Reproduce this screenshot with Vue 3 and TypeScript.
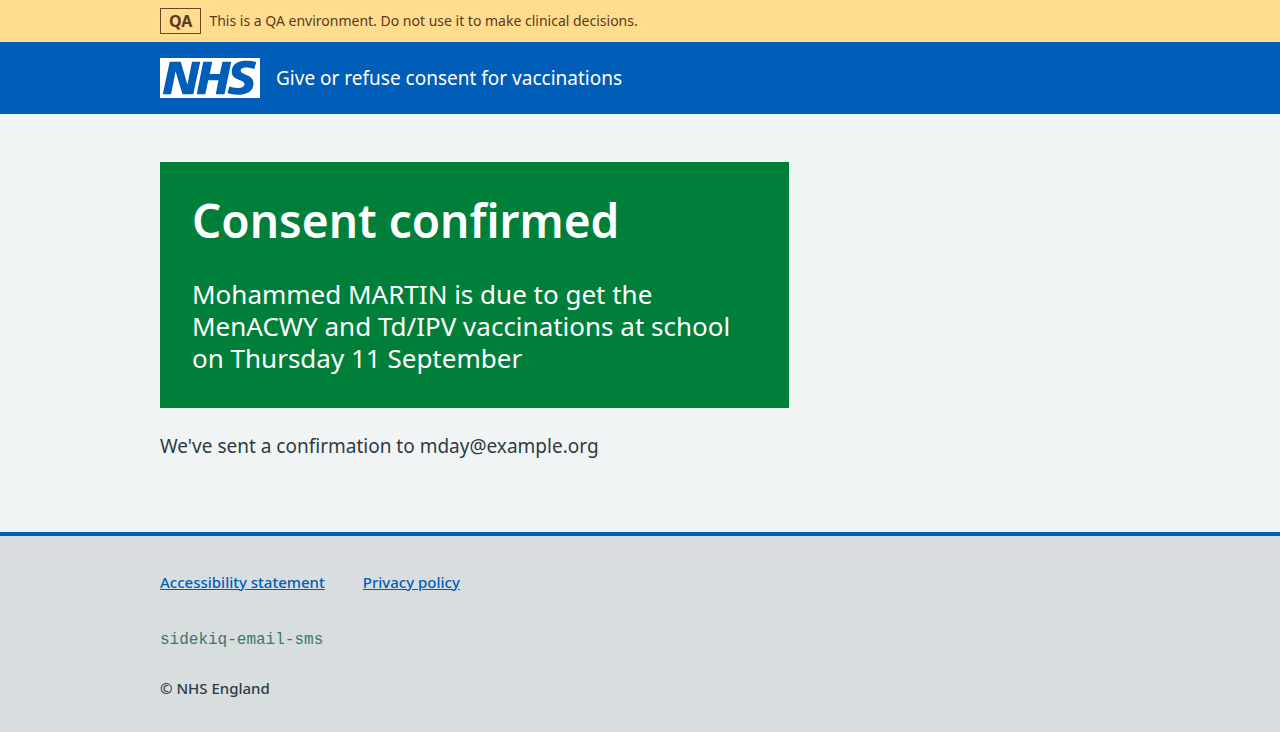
<script setup lang="ts">
interface FooterLink {
  label: string
  href: string
}

const footerLinks: FooterLink[] = [
  { label: 'Accessibility statement', href: '#accessibility-statement' },
  { label: 'Privacy policy', href: '#privacy-policy' },
]

const email = 'mday@example.org'
</script>

<template>
  <div class="page">
    <aside class="environment" aria-label="Environment">
      <div class="container environment-inner">
        <strong class="environment-tag">QA</strong>
        <span>This is a QA environment. Do not use it to make clinical decisions.</span>
      </div>
    </aside>

    <header class="header">
      <div class="container">
        <a class="header-link" href="#start">
          <svg class="logo" viewBox="0 0 200 80" role="img" aria-label="NHS">
            <path
              fill="currentColor"
              d="M200 0v80H0V0h200Zm-27.500 5.500c-14.500 0-29 5-29 22 0 10.200 7.700 13.500 14.700 16.300l.7.3c5.400 2 10.100 3.900 10.100 8.400 0 6.500-8.500 7.500-14 7.500s-12.500-1.500-16-3.500L135 70c5.500 2 13.500 3.500 20 3.500 15.500 0 32-4.500 32-22.500 0-19.500-25.500-16.500-25.500-25.500 0-5.500 5.500-6.500 12.500-6.500a35 35 0 0 1 14.500 3l4-13.500c-4.500-2-12-3-20-3Zm-131 2h-22l-14 65H22l9-45h.5l13.500 45h21.500l14-65H64l-9 45h-.5l-13-45Zm63 0h-18l-13 65h17l6-28H117l-5.500 28H129l13.500-65H125L119.500 32h-20l5-24.500Z"
            />
          </svg>
          <span>Give or refuse consent for vaccinations</span>
        </a>
      </div>
    </header>

    <main class="container main">
      <div class="content">
        <section class="panel">
          <h1 class="panel-title">Consent confirmed</h1>
          <p class="panel-body">
            Mohammed MARTIN is due to get the MenACWY and Td/IPV vaccinations at school on Thursday
            11 September
          </p>
        </section>
        <p class="body-text">We've sent a confirmation to {{ email }}</p>
      </div>
    </main>

    <footer class="footer">
      <div class="container">
        <ul class="footer-links">
          <li v-for="link in footerLinks" :key="link.href">
            <a :href="link.href">{{ link.label }}</a>
          </li>
        </ul>
        <p class="release">sidekiq-email-sms</p>
        <p class="copyright">© NHS England</p>
      </div>
    </footer>
  </div>
</template>

<style>
body {
  margin: 0;
  background: #d8dde0;
}
</style>

<style scoped>
.page {
  display: flex;
  flex-direction: column;
  min-height: 100vh;
  background: #f0f4f5;
  color: #2f3b40;
  font-family: 'Noto Sans', 'Open Sans', Arial, sans-serif;
  font-size: 19px;
  line-height: 28px;
}

.container {
  box-sizing: border-box;
  width: 100%;
  max-width: 1024px;
  margin: 0 auto;
  padding: 0 32px;
}

.environment {
  background: #ffdc8e;
  color: #5b3a1c;
  font-size: 14px;
  line-height: 24px;
}

.environment-inner {
  display: flex;
  align-items: center;
  gap: 8px;
  padding-top: 8px;
  padding-bottom: 8px;
}

.environment-tag {
  padding: 0 8px;
  border: 1px solid #6b4423;
  font-size: 16px;
  font-weight: 700;
}

.header {
  padding: 16px 0;
  background: #005eb8;
}

.header-link {
  display: inline-flex;
  align-items: center;
  gap: 16px;
  color: #fff;
  text-decoration: none;
  vertical-align: top;
}

.logo {
  display: block;
  width: 100px;
  height: 40px;
}

.main {
  display: grid;
  flex: 1;
  grid-template-columns: 2fr 1fr;
  gap: 16px;
  padding-top: 48px;
  padding-bottom: 72px;
}

.panel {
  padding: 32px 32px 34px;
  background: #007f3b;
  color: #fff;
}

.panel-title {
  margin: 0 0 32px;
  font-size: 46px;
  font-weight: 600;
  line-height: 52px;
}

.panel-body {
  margin: 0;
  font-size: 26px;
  line-height: 32px;
}

.body-text {
  margin: 24px 0 0;
}

.footer {
  padding: 32px 0;
  border-top: 4px solid #005eb8;
  background: #d8dde0;
  font-size: 15px;
  font-weight: 500;
}

.footer-links {
  display: flex;
  flex-wrap: wrap;
  gap: 8px 38px;
  margin: 0 0 30px;
  padding: 0;
  list-style: none;
}

.footer-links a {
  color: #005eb8;
}

.release {
  margin: 0 0 20px;
  color: #40766a;
  font-family: 'Liberation Mono', monospace;
  font-size: 16px;
  font-weight: 400;
}

.copyright {
  margin: 0;
}
</style>
